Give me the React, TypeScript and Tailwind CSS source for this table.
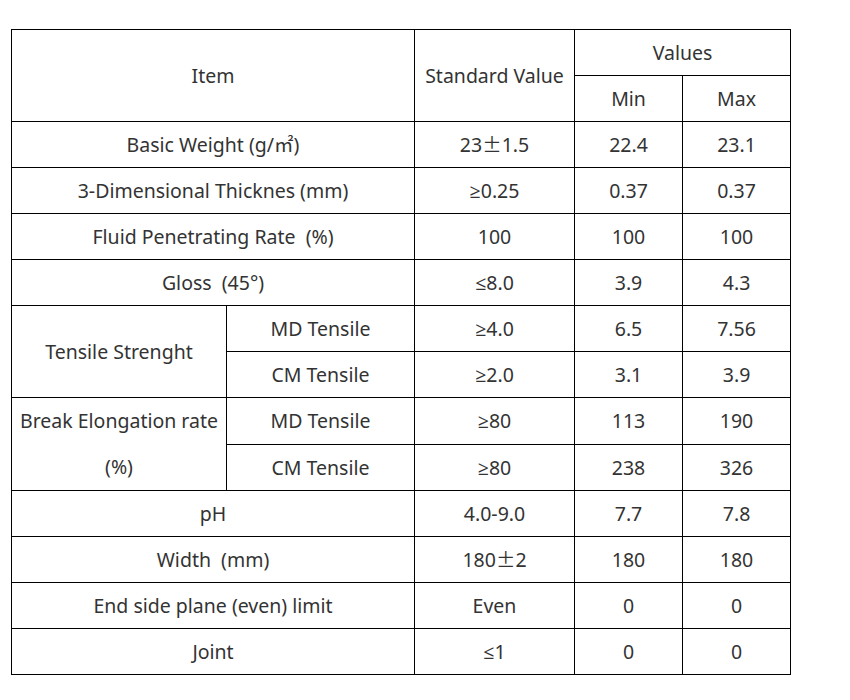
const cjk = { fontFamily: '"Noto Sans CJK SC", sans-serif' };

const Pm = ({ a, b }: { a: string; b: string }) => (
  <>
    {a}
    <span style={cjk}>±</span>
    {b}
  </>
);

type Row = [React.ReactNode, React.ReactNode, string, string];

const rows: Row[] = [
  [
    <>
      Basic Weight (g/<span style={cjk}>㎡</span>)
    </>,
    <Pm a="23" b="1.5" />,
    "22.4",
    "23.1",
  ],
  ["3-Dimensional Thicknes (mm)", "≥0.25", "0.37", "0.37"],
  ["Fluid Penetrating Rate  (%)", "100", "100", "100"],
  ["Gloss  (45°)", "≤8.0", "3.9", "4.3"],
];

const rowsAfter: Row[] = [
  ["pH", "4.0-9.0", "7.7", "7.8"],
  ["Width  (mm)", <Pm a="180" b="2" />, "180", "180"],
  ["End side plane (even) limit", "Even", "0", "0"],
  ["Joint", "≤1", "0", "0"],
];

const td = "border border-black text-center align-middle p-0 whitespace-pre";

const PlainRow = ({ r }: { r: Row }) => (
  <tr className="h-[46px]">
    <td className={td} colSpan={2}>
      {r[0]}
    </td>
    <td className={td}>{r[1]}</td>
    <td className={td}>{r[2]}</td>
    <td className={td}>{r[3]}</td>
  </tr>
);

export default function App() {
  return (
    <div
      className="bg-white w-[850px] h-[700px] pt-[29px] pl-[11px] text-[#333] text-[19.5px]"
      style={{ fontFamily: '"Noto Sans", "Open Sans", sans-serif' }}
    >
      <table className="table-fixed border-collapse w-[779px]">
        <colgroup>
          <col className="w-[215px]" />
          <col className="w-[188px]" />
          <col className="w-[160px]" />
          <col className="w-[108px]" />
          <col className="w-[108px]" />
        </colgroup>
        <tbody>
          <tr className="h-[46px]">
            <td className={td} colSpan={2} rowSpan={2}>
              Item
            </td>
            <td className={td} rowSpan={2}>
              Standard Value
            </td>
            <td className={td} colSpan={2}>
              Values
            </td>
          </tr>
          <tr className="h-[46px]">
            <td className={td}>Min</td>
            <td className={td}>Max</td>
          </tr>
          {rows.map((r, i) => (
            <PlainRow key={i} r={r} />
          ))}
          <tr className="h-[46px]">
            <td className={td} rowSpan={2}>
              Tensile Strenght
            </td>
            <td className={td}>MD Tensile</td>
            <td className={td}>≥4.0</td>
            <td className={td}>6.5</td>
            <td className={td}>7.56</td>
          </tr>
          <tr className="h-[46px]">
            <td className={td}>CM Tensile</td>
            <td className={td}>≥2.0</td>
            <td className={td}>3.1</td>
            <td className={td}>3.9</td>
          </tr>
          <tr className="h-[47px]">
            <td className="border border-black text-center align-middle p-0 leading-[46px]" rowSpan={2}>
              Break Elongation rate
              <br />
              (%)
            </td>
            <td className={td}>MD Tensile</td>
            <td className={td}>≥80</td>
            <td className={td}>113</td>
            <td className={td}>190</td>
          </tr>
          <tr className="h-[46px]">
            <td className={td}>CM Tensile</td>
            <td className={td}>≥80</td>
            <td className={td}>238</td>
            <td className={td}>326</td>
          </tr>
          {rowsAfter.map((r, i) => (
            <PlainRow key={i} r={r} />
          ))}
        </tbody>
      </table>
    </div>
  );
}
